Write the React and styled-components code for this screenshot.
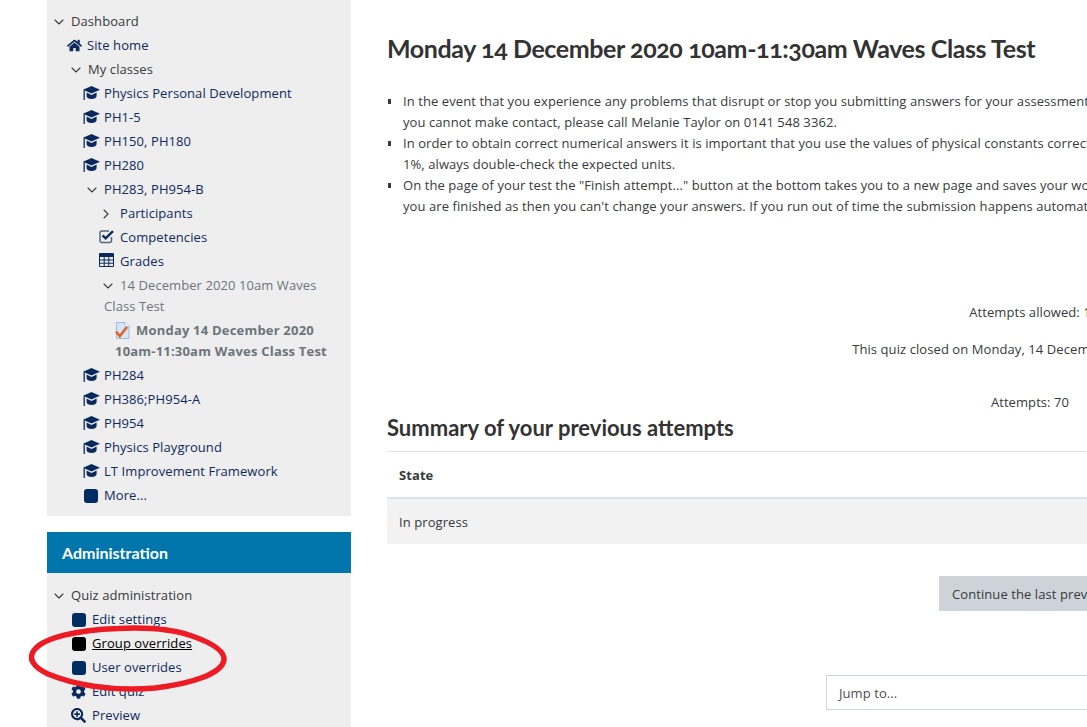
import React from 'react';
import styled, { createGlobalStyle } from 'styled-components';
import { FaHome, FaCog, FaSearchPlus } from 'react-icons/fa';
import { ChevronDown, ChevronRight } from 'lucide-react';

const NAVY = '#0f2a5e';
const ICON = '#0b2a5b';

const GlobalStyle = createGlobalStyle`
  html, body {
    margin: 0;
    padding: 0;
    background: #fff;
    overflow: hidden;
  }
  body {
    font-family: "Open Sans", "Liberation Sans", sans-serif;
    font-size: 13px;
    line-height: 21px;
    letter-spacing: 0.08px;
    color: #373a3c;
  }
`;

const Page = styled.div`
  position: relative;
  display: flex;
  width: 1087px;
  height: 727px;
  overflow: hidden;
  padding-left: 47px;
  box-sizing: border-box;
`;

const Sidebar = styled.aside`
  flex: 0 0 304px;
  display: flex;
  flex-direction: column;
  gap: 16px;
`;

const Panel = styled.div`
  background: #eee;
  padding: ${(p) => p.$top}px 0 9px;
`;

const BlockHeader = styled.h2`
  margin: 0;
  height: 41px;
  padding-left: 15px;
  background: #0076ad;
  color: #fff;
  font-family: "Lato", sans-serif;
  font-size: 16px;
  font-weight: 700;
  line-height: 41px;
  letter-spacing: 0;
`;

const Row = styled.div`
  padding: 1.5px 20px 1.5px ${(p) => p.$indent}px;
  color: ${(p) => p.$color || NAVY};
  font-weight: ${(p) => (p.$bold ? 700 : 400)};
  letter-spacing: ${(p) => (p.$bold ? '0.2px' : 'inherit')};
`;

const HoverLink = styled.span`
  text-decoration: underline;
`;

const IconSlot = styled.span`
  display: inline-block;
  width: ${(p) => p.$w}px;
  vertical-align: top;
  height: 21px;
  svg {
    display: block;
    margin-top: ${(p) => p.$mt ?? 4}px;
    margin-left: ${(p) => p.$ml ?? 0}px;
  }
`;

const Square = styled.span`
  display: block;
  width: 14px;
  height: 14px;
  margin: 4px 0 0 1px;
  border-radius: 3px;
  background: ${(p) => p.$color || '#002e62'};
`;

const Main = styled.main`
  flex: 0 0 1286px;
  margin-left: 36px;
`;

const Title = styled.h1`
  margin: 32px 0 27px;
  font-family: "Lato", sans-serif;
  font-size: 25px;
  font-weight: 700;
  line-height: 32px;
  letter-spacing: -0.4px;
  white-space: nowrap;
  color: #333;
  font-variant-numeric: oldstyle-nums;
`;

const Notes = styled.ul`
  margin: 0;
  padding: 0 0 0 16px;
  list-style: none;
`;

const Note = styled.li`
  position: relative;
  &::before {
    content: '';
    position: absolute;
    left: -15px;
    top: 8px;
    width: 3px;
    height: 5px;
    background: #373a3c;
  }
`;

const Centered = styled.p`
  margin: ${(p) => p.$top}px 0 0;
  text-align: center;
`;

const SectionTitle = styled.h3`
  margin: 0 0 9px;
  font-family: "Lato", sans-serif;
  font-size: 22px;
  font-weight: 700;
  line-height: 29px;
  letter-spacing: 0;
  color: #333;
`;

const Table = styled.div`
  border-top: 1px solid #dee2e6;
`;

const TableHead = styled.div`
  height: 45px;
  padding-left: 12px;
  border-bottom: 2px solid #dee2e6;
  font-weight: 700;
  line-height: 46px;
`;

const TableRow = styled.div`
  height: 45px;
  padding-left: 12px;
  background: #f2f2f2;
  line-height: 46px;
`;

const ButtonRow = styled.div`
  display: flex;
  justify-content: center;
  margin-top: 32px;
`;

const Button = styled.button`
  width: 182px;
  height: 35px;
  padding: 1px 13px 0;
  border: 0;
  background: #ced3da;
  color: #373a3c;
  font: inherit;
  letter-spacing: inherit;
  white-space: nowrap;
`;

const JumpRow = styled.div`
  display: flex;
  justify-content: center;
  margin-top: 64px;
`;

const JumpSelect = styled.div`
  width: 408px;
  height: 35px;
  box-sizing: border-box;
  padding-left: 12px;
  border: 1px solid #ced4da;
  line-height: 35px;
  color: #495057;
`;

const Scribble = styled.svg`
  position: absolute;
  left: 0;
  top: 0;
  pointer-events: none;
`;

const Cap = () => (
  <IconSlot $w={21} $mt={3}>
    <svg width="17" height="15" viewBox="0 0 17 15">
      <path d="M8.5 0L17 3.8 8.5 7.6 0 3.8z" fill={ICON} />
      <path d="M3.6 6.6v3.6c0 1.5 2.3 2.7 5 2.7s5-1.2 5-2.7V6.6L8.5 8.9z" fill={ICON} />
      <path d="M1.2 4.2v9.8" stroke={ICON} strokeWidth="1.3" fill="none" />
    </svg>
  </IconSlot>
);

const Chevron = ({ open = true }) => (
  <IconSlot $w={16} $mt={3} $ml={open ? -4 : -6}>
    {open ? (
      <ChevronDown size={16} strokeWidth={1.6} color="#373a3c" />
    ) : (
      <ChevronRight size={16} strokeWidth={1.6} color="#373a3c" />
    )}
  </IconSlot>
);

const CheckIcon = () => (
  <IconSlot $w={21} $mt={2}>
    <svg width="16" height="15" viewBox="0 0 16 15">
      <path d="M12.5 8v3.5a2 2 0 0 1-2 2H3a2 2 0 0 1-2-2V4a2 2 0 0 1 2-2h7" fill="none" stroke="#56657f" strokeWidth="1.5" />
      <path d="M3.6 6.4l3 3L14 2.2" fill="none" stroke={ICON} strokeWidth="2.4" />
    </svg>
  </IconSlot>
);

const GridIcon = () => (
  <IconSlot $w={21} $mt={2}>
    <svg width="15" height="14" viewBox="0 0 15 14">
      <rect x="0" y="0" width="15" height="4" rx="1" fill={ICON} />
      <path d="M.5 1v12.5h14V1M5.2 4v9.5M9.8 4v9.5M.5 7h14M.5 10.2h14" fill="none" stroke={ICON} strokeWidth="1" />
    </svg>
  </IconSlot>
);

const QuizIcon = () => (
  <IconSlot $w={21} $mt={2}>
    <svg width="16" height="17" viewBox="0 0 16 17">
      <path d="M1.5 .5h8.5l4 4v12H1.5z" fill="#d7e6f7" stroke="#9dbde0" />
      <path d="M10 .5v4h4" fill="#fff" stroke="#9dbde0" />
      <path d="M1 9.5l3.8 4.6L12 5" fill="none" stroke="#dd6428" strokeWidth="2.6" />
    </svg>
  </IconSlot>
);

const courses1 = ['Physics Personal Development', 'PH1-5', 'PH150, PH180', 'PH280'];
const courses2 = ['PH284', 'PH386;PH954-A', 'PH954', 'Physics Playground', 'LT Improvement Framework'];

const NavTree = () => (
  <Panel $top={9}>
    <Row $indent={8} $color="#373a3c"><Chevron />Dashboard</Row>
    <Row $indent={20}>
      <IconSlot $w={20} $mt={3}><FaHome size={15} color={ICON} /></IconSlot>Site home
    </Row>
    <Row $indent={25} $color="#373a3c"><Chevron />My classes</Row>
    {courses1.map((c) => (
      <Row key={c} $indent={36}><Cap />{c}</Row>
    ))}
    <Row $indent={41}><Chevron />PH283, PH954-B</Row>
    <Row $indent={57}><Chevron open={false} />Participants</Row>
    <Row $indent={52}><CheckIcon />Competencies</Row>
    <Row $indent={52}><GridIcon />Grades</Row>
    <Row $indent={57} $color="#6c757d">
      <Chevron />14 December 2020 10am Waves Class Test
    </Row>
    <Row $indent={68} $color="#6c757d" $bold>
      <QuizIcon />Monday 14 December 2020 10am-11:30am Waves Class Test
    </Row>
    {courses2.map((c) => (
      <Row key={c} $indent={36}><Cap />{c}</Row>
    ))}
    <Row $indent={36}>
      <IconSlot $w={21}><Square /></IconSlot>More...
    </Row>
  </Panel>
);

const AdminTree = () => (
  <div>
    <BlockHeader>Administration</BlockHeader>
    <Panel $top={10}>
      <Row $indent={8} $color="#373a3c"><Chevron />Quiz administration</Row>
      <Row $indent={24}><IconSlot $w={21}><Square /></IconSlot>Edit settings</Row>
      <Row $indent={24} $color="#000">
        <IconSlot $w={21}><Square $color="#000" /></IconSlot>
        <HoverLink>Group overrides</HoverLink>
      </Row>
      <Row $indent={24}><IconSlot $w={21}><Square /></IconSlot>User overrides</Row>
      <Row $indent={24}>
        <IconSlot $w={21} $mt={3}><FaCog size={15} color={ICON} /></IconSlot>Edit quiz
      </Row>
      <Row $indent={24}>
        <IconSlot $w={21} $mt={3}><FaSearchPlus size={15} color={ICON} /></IconSlot>Preview
      </Row>
    </Panel>
  </div>
);

const App = () => (
  <>
    <GlobalStyle />
    <Page>
      <Sidebar>
        <NavTree />
        <AdminTree />
      </Sidebar>
      <Main>
        <Title>Monday 14 December 2020 10am-11:30am Waves Class Test</Title>
        <Notes>
          <Note>
            In the event that you experience any problems that disrupt or stop you submitting answers for your assessment, please contact the class lecturer straight away. If<br />
            you cannot make contact, please call Melanie Taylor on 0141 548 3362.
          </Note>
          <Note>
            In order to obtain correct numerical answers it is important that you use the values of physical constants correctly and that your answers are accurate to within<br />
            1%, always double-check the expected units.
          </Note>
          <Note>
            On the page of your test the "Finish attempt..." button at the bottom takes you to a new page and saves your work. Only submit all and finish when<br />
            you are finished as then you can't change your answers. If you run out of time the submission happens automatically.
          </Note>
        </Notes>
        <Centered $top={85}>Attempts allowed: 1</Centered>
        <Centered $top={16}>This quiz closed on Monday, 14 December 2020, 11:30 AM</Centered>
        <Centered $top={32}>Attempts: 70</Centered>
        <SectionTitle>Summary of your previous attempts</SectionTitle>
        <Table>
          <TableHead>State</TableHead>
          <TableRow>In progress</TableRow>
        </Table>
        <ButtonRow>
          <Button>Continue the last preview</Button>
        </ButtonRow>
        <JumpRow>
          <JumpSelect>Jump to...</JumpSelect>
        </JumpRow>
      </Main>
      <Scribble width="1087" height="727" viewBox="0 0 1087 727">
        <path
          d="M118 628.5C150 627 175 630 192 636C212 643 225 651 224 660C222 673 195 683 155 688C110 692 72 684 48 674C33 667 27 658 35 649C45 638 75 630 118 628.5"
          fill="none"
          stroke="#ed1c24"
          strokeWidth="5.5"
        />
      </Scribble>
    </Page>
  </>
);

export default App;
